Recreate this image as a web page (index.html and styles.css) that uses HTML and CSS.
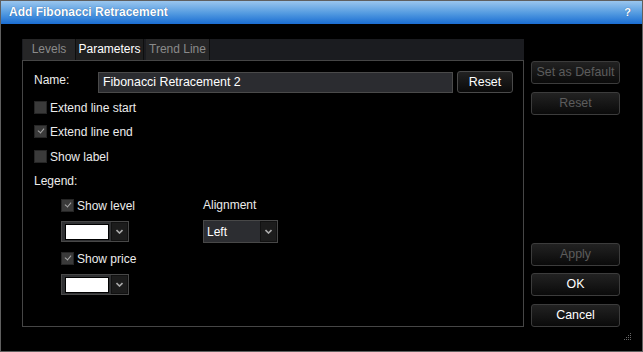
FILE: index.html
```
<html>
<head>
    <title>Add Fibonacci Retracement</title>
    <meta charset="UTF-8">
<link rel="stylesheet" href="styles.css">
</head>
<body>
    <div id="window">
        <div id="titleBar">
            <span>Add Fibonacci Retracement</span>
            <span class="helpMark">?</span>
        </div>
        <div id="content">
            <div id="tabArea">
                <div id="tabStrip">
                    <div class="tab">Levels</div>
                    <div class="tab activeTab">Parameters</div>
                    <div class="tab">Trend Line</div>
                </div>
                <div id="tabPanel">
                    <div class="nameRow">
                        <div class="nameLabel">Name:</div>
                        <div class="textBox">Fibonacci Retracement 2</div>
                        <div class="button smallButton">Reset</div>
                    </div>
                    <div class="checkRow"><span class="checkBox"></span>Extend line start</div>
                    <div class="checkRow"><span class="checkBox checked"></span>Extend line end</div>
                    <div class="checkRow labelRow"><span class="checkBox"></span>Show label</div>
                    <div class="legendLabel">Legend:</div>
                    <div id="legendArea">
                        <div class="legendColumn">
                            <div class="checkRow subRow"><span class="checkBox checked"></span>Show level</div>
                            <div class="colorPicker">
                                <span class="swatch"></span>
                                <span class="arrowButton"></span>
                            </div>
                            <div class="checkRow subRow priceRow"><span class="checkBox checked"></span>Show price</div>
                            <div class="colorPicker">
                                <span class="swatch"></span>
                                <span class="arrowButton"></span>
                            </div>
                        </div>
                        <div class="legendColumn">
                            <div class="alignLabel">Alignment</div>
                            <div class="selectBox">
                                <span class="selectText">Left</span>
                                <span class="arrowButton"></span>
                            </div>
                        </div>
                    </div>
                </div>
            </div>
            <div id="sideButtons">
                <div class="button disabled">Set as Default</div>
                <div class="button disabled">Reset</div>
                <div class="button disabled pushDown">Apply</div>
                <div class="button">OK</div>
                <div class="button">Cancel</div>
            </div>
        </div>
        <svg class="grip" width="9" height="9" viewBox="0 0 9 9">
            <rect x="7" y="1" width="1" height="1" fill="#666"/>
            <rect x="5" y="3" width="1" height="1" fill="#666"/>
            <rect x="7" y="3" width="1" height="1" fill="#666"/>
            <rect x="3" y="5" width="1" height="1" fill="#666"/>
            <rect x="5" y="5" width="1" height="1" fill="#666"/>
            <rect x="7" y="5" width="1" height="1" fill="#666"/>
            <rect x="1" y="7" width="1" height="1" fill="#666"/>
            <rect x="3" y="7" width="1" height="1" fill="#666"/>
            <rect x="5" y="7" width="1" height="1" fill="#666"/>
            <rect x="7" y="7" width="1" height="1" fill="#666"/>
        </svg>
    </div>
</body>
</html>
```

FILE: styles.css
```
body {
    margin: 0;
    padding: 0;
    background-color: #000;
    font-family: "Liberation Sans", Arial, sans-serif;
    font-size: 12px;
    color: #ececec;
}

#window {
    position: relative;
    width: 643px;
    height: 352px;
    box-sizing: border-box;
    border: 1px solid #5f5f5f;
    background-color: #000;
}

#titleBar {
    height: 23px;
    line-height: 23px;
    padding-left: 8px;
    padding-right: 11px;
    display: flex;
    justify-content: space-between;
    background: linear-gradient(#9ac6ee, #5199e0 55%, #1a6dd2);
    color: #fff;
    font-weight: bold;
    font-size: 12px;
    text-shadow: 0 0 1px #1c4f90;
}

.helpMark {
    font-size: 11px;
}

#content {
    display: flex;
    padding: 15px 0 0 21px;
}

#tabArea {
    width: 502px;
}

#tabStrip {
    height: 21px;
    display: flex;
    background-color: #1b1c20;
}

.tab {
    height: 21px;
    line-height: 21px;
    margin-left: 1px;
    background-color: #262627;
    border-right: 1px solid #0e0e0e;
    color: #8a8a8a;
    box-sizing: border-box;
    text-align: center;
}

.tab:first-child {
    width: 53px;
}

.activeTab {
    width: 68px;
    margin-left: 0;
    background-color: #1f1f1f;
    color: #fff;
}

.tab:last-child {
    margin-left: 2px;
    width: 64px;
}

#tabPanel {
    height: 267px;
    box-sizing: border-box;
    border: 1px solid #464646;
    padding: 10px 0 0 11px;
}

.nameRow {
    display: flex;
    align-items: center;
    height: 22px;
}

.nameLabel {
    width: 64px;
    margin-top: -5px;
}

.textBox {
    width: 355px;
    height: 21px;
    line-height: 19px;
    box-sizing: border-box;
    border: 1px solid #4a4a4a;
    background-color: #2b2c30;
    padding-left: 4px;
    color: #fff;
    font-size: 12.4px;
}

.button {
    height: 23px;
    line-height: 21px;
    box-sizing: border-box;
    border: 1px solid #3c3c3c;
    border-radius: 3px;
    background: linear-gradient(#222, #0a0a0a);
    color: #fff;
    text-align: center;
    font-size: 12.4px;
}

.smallButton {
    width: 56px;
    margin-left: 4px;
    height: 22px;
    line-height: 20px;
    border-color: #4a4a4a;
}

.disabled {
    color: #5c5c5c;
}

.checkRow {
    display: flex;
    align-items: center;
    height: 13px;
    margin-top: 11px;
}

.nameRow + .checkRow {
    margin-top: 8px;
}

.labelRow {
    margin-top: 12px;
}

.checkBox {
    width: 13px;
    height: 13px;
    box-sizing: border-box;
    border: 1px solid #262626;
    background-color: #3a3a3a;
    margin-right: 3px;
    position: relative;
}

.checked::after {
    content: "";
    position: absolute;
    left: 3px;
    top: 2px;
    width: 5px;
    height: 3px;
    border-left: 1px solid #a8a8a8;
    border-bottom: 1px solid #a8a8a8;
    transform: rotate(-50deg);
}

.legendLabel {
    margin-top: 11px;
    height: 14px;
}

#legendArea {
    display: flex;
    padding-left: 27px;
}

.legendColumn {
    width: 142px;
}

.subRow {
    margin-top: 11px;
}

.priceRow {
    margin-top: 10px;
}

.colorPicker {
    margin-top: 9px;
    width: 68px;
    height: 21px;
    box-sizing: border-box;
    border: 1px solid #484848;
    background-color: #303133;
    display: flex;
    align-items: center;
    padding-left: 3px;
}

.swatch {
    width: 42px;
    height: 14px;
    background-color: #fff;
    border: 1px solid #000;
}

.arrowButton {
    width: 17px;
    height: 19px;
    margin-left: auto;
    box-sizing: border-box;
    border: 1px solid #111;
    background: #1c1c1c url("data:image/svg+xml;utf8,<svg xmlns='http://www.w3.org/2000/svg' width='7' height='5'><path d='M0.5 1 L3.5 4 L6.5 1' stroke='%23aaa' stroke-width='1.6' fill='none'/></svg>") no-repeat center;
}

.alignLabel {
    margin-top: 10px;
    height: 14px;
}

.selectBox {
    margin-top: 8px;
    width: 75px;
    height: 23px;
    box-sizing: border-box;
    border: 1px solid #484848;
    background-color: #2c2d31;
    display: flex;
    align-items: center;
    padding-left: 3px;
}

.selectBox .arrowButton {
    height: 21px;
}

.selectText {
    color: #fff;
}

#sideButtons {
    width: 89px;
    margin-left: 7px;
    padding-top: 22px;
    height: 288px;
    box-sizing: border-box;
    display: flex;
    flex-direction: column;
    gap: 8px;
}

.pushDown {
    margin-top: auto;
}

#sideButtons .button:nth-child(4) {
    margin-top: -1px;
}

.grip {
    position: absolute;
    right: 10px;
    bottom: 10px;
}
```
